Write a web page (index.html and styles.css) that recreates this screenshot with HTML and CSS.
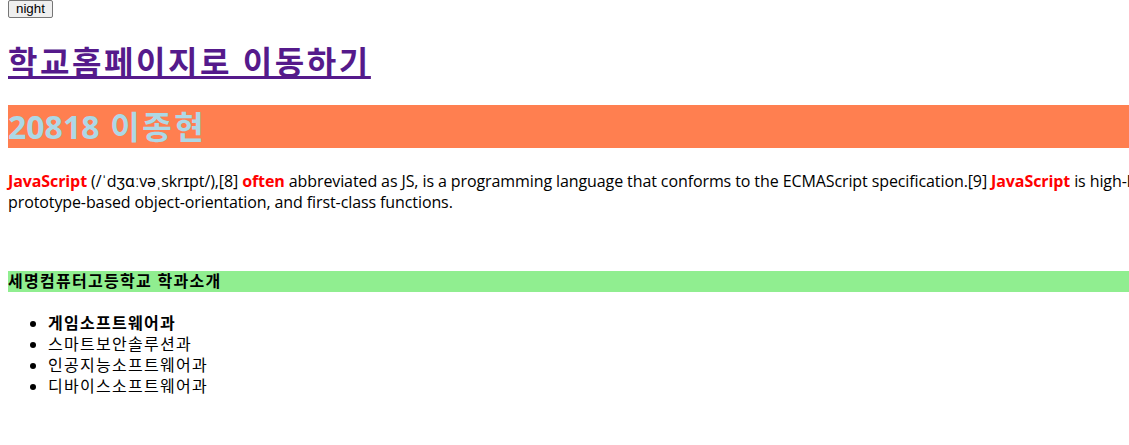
FILE: index.html
```html
<!DOCTYPE html>
<html lang="ko">
<head>
<meta charset="utf-8">
<title>20818 이종현</title>
<link rel="stylesheet" href="styles.css">
</head>
<body>
<div class="page">
  <button class="night-btn" type="button">night</button>
  <h1 class="home-title ko"><a class="home-link" href="#">학교홈페이지로 이동하기</a></h1>
  <h1 class="name-title">20818<span class="ko"> 이종현</span></h1>
  <p class="intro"><strong class="hl">JavaScript</strong> (/ˈdʒɑːvəˌskrɪpt/),[8] <strong class="hl">often</strong> abbreviated as JS, is a programming language that conforms to the ECMAScript specification.[9] <strong class="hl">JavaScript</strong> is high-level, often just-in-time compiled, and multi-paradigm. It has curly-bracket syntax, dynamic typing, prototype-based object-orientation, and first-class functions.</p>
  <div class="spacer"></div>
  <h4 class="dept-title ko">세명컴퓨터고등학교 학과소개</h4>
  <ul class="dept-list ko">
    <li><strong>게임소프트웨어과</strong></li>
    <li>스마트보안솔루션과</li>
    <li>인공지능소프트웨어과</li>
    <li>디바이스소프트웨어과</li>
  </ul>
</div>
</body>
</html>
```
FILE: styles.css
```css
html {
  overflow: hidden;
}
body {
  margin: 0;
  font-family: "Open Sans", "Noto Sans CJK KR", sans-serif;
  font-size: 16px;
  line-height: 1.33;
  color: #000;
  background: #fff;
}
.page {
  width: 1880px;
  padding: 0 8px;
}
.ko {
  letter-spacing: 0.08em;
}
.night-btn {
  font-family: "Liberation Sans", Arial, sans-serif;
  font-size: 13.33px;
  line-height: 14px;
  height: 18px;
  padding: 1px 7px;
  margin: 0;
  background: #efefef;
  border: 1px solid #767676;
  border-radius: 2px;
  color: #000;
  vertical-align: top;
}
.home-title,
.name-title {
  font-size: 32px;
  font-weight: 700;
  line-height: 43px;
}
.home-title {
  margin: 19px 0 21.44px;
}
.name-title {
  margin: 21.44px 0 23.44px;
  background: #ff7f50;
  color: #add8e6;
}
.home-link {
  color: #551a8b;
  text-decoration: underline;
}
.intro {
  margin: 16px 0;
  line-height: 21.3px;
  letter-spacing: -0.1px;
}
.hl {
  color: #ff0000;
}
.spacer {
  height: 20px;
}
.dept-title {
  background: #90ee90;
  margin: 21.28px 0;
  font-size: 16px;
  line-height: 21px;
}
.dept-list {
  margin: 16px 0;
  padding-left: 40px;
  line-height: 21px;
}
```
